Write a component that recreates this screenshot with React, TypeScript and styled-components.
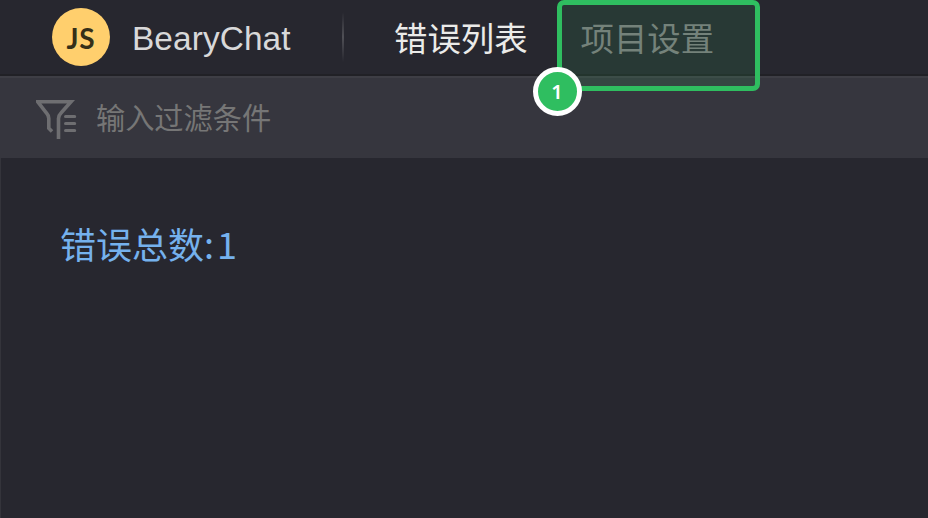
import React from "react";
import styled, { createGlobalStyle } from "styled-components";

const cjk = '"Noto Sans CJK SC", sans-serif';

const GlobalStyle = createGlobalStyle`
  * { box-sizing: border-box; }
  body { margin: 0; background: #27272f; font-family: ${cjk}; overflow: hidden; }
`;

const Page = styled.div`
  display: flex;
  flex-direction: column;
  width: 928px;
  height: 518px;
  background: #27272f;
`;

const Header = styled.header`
  display: flex;
  align-items: center;
  height: 76px;
  padding-left: 52px;
  border-bottom: 2px solid #212126;
`;

const Logo = styled.div`
  display: flex;
  align-items: center;
  justify-content: center;
  width: 58px;
  height: 58px;
  padding-top: 2px;
  border-radius: 50%;
  background: #ffcf6d;
  color: #352f18;
  font: 700 28px/56px Lato, sans-serif;
  letter-spacing: 0.8px;
`;

const ProjectName = styled.div`
  width: 160px;
  margin-left: 22px;
  padding-top: 4px;
  color: #d8d8d9;
  font: 33.4px/40px "Liberation Sans", sans-serif;
  letter-spacing: 0.1px;
  white-space: nowrap;
`;

const Divider = styled.div`
  width: 2px;
  height: 50px;
  margin: 0 50px;
  background: linear-gradient(transparent, #505056 50%, transparent);
`;

const Nav = styled.nav`
  display: flex;
  gap: 53px;
`;

const Tab = styled.a<{ $active?: boolean }>`
  position: relative;
  color: ${(p) => (p.$active ? "#ebebe9" : "#7e7a7e")};
  font: 400 33.4px/48px ${cjk};
  white-space: nowrap;
`;

const Highlight = styled.div`
  position: absolute;
  left: -24px;
  top: -13px;
  width: 203px;
  height: 91px;
  border: 5px solid #2fbe60;
  border-radius: 7px;
  background: rgba(47, 190, 96, 0.12);
`;

const StepBadge = styled.div`
  position: absolute;
  left: -29px;
  top: 62px;
  display: flex;
  align-items: center;
  justify-content: center;
  width: 49px;
  height: 49px;
  border: 5px solid #fff;
  border-radius: 50%;
  background: #2fbe60;
  color: #fff;
  font: 600 20px/20px "Noto Sans", sans-serif;
`;

const FilterBar = styled.div`
  display: flex;
  align-items: center;
  gap: 19px;
  height: 82px;
  padding-left: 36px;
  border-top: 2px solid #3e3e45;
  background: #36363e;
`;

const Placeholder = styled.span`
  padding-bottom: 4px;
  color: #767676;
  font: 400 29.2px/42px ${cjk};
`;

const Content = styled.main`
  flex: 1;
  padding: 58px 59px;
  border-left: 1px solid #34343b;
`;

const Total = styled.div`
  display: flex;
  gap: 3px;
  color: #75b1ed;
  font: 400 36px/54px ${cjk};
`;

const FilterIcon = () => (
  <svg width="41" height="42" viewBox="0 0 41 42" fill="none" stroke="#6e6e71" strokeWidth="3.6">
    <path d="M16 34.4 L12.8 31.2 V21.5 Q12.8 18.5 10.5 16 L1.8 4.8 H35 L25 16 Q22.5 18.5 22.5 21.5 V42" />
    <path d="M29.5 19.5 H38.7 M29.5 26.5 H38.7 M29.5 33.5 H38.7" strokeWidth="3" strokeLinecap="round" />
  </svg>
);

export default function App() {
  return (
    <Page>
      <GlobalStyle />
      <Header>
        <Logo>JS</Logo>
        <ProjectName>BearyChat</ProjectName>
        <Divider />
        <Nav>
          <Tab $active>错误列表</Tab>
          <Tab>
            项目设置
            <Highlight>
              <StepBadge>1</StepBadge>
            </Highlight>
          </Tab>
        </Nav>
      </Header>
      <FilterBar>
        <FilterIcon />
        <Placeholder>输入过滤条件</Placeholder>
      </FilterBar>
      <Content>
        <Total>
          <span>错误总数:</span>
          <span>1</span>
        </Total>
      </Content>
    </Page>
  );
}
